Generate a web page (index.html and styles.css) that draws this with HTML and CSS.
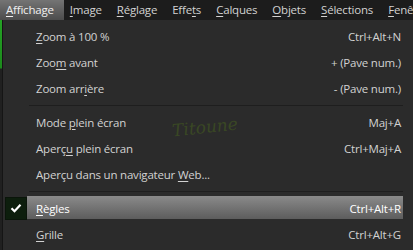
FILE: index.html
```html
<!DOCTYPE html>
<html lang="fr">
<head>
    <meta charset="UTF-8">
    <title>Affichage</title>
    <link rel="stylesheet" href="styles.css">
</head>
<body>
    <div class="menubar">
        <span class="top active"><u>A</u>ffichage</span>
        <span class="top"><u>I</u>mage</span>
        <span class="top"><u>R</u>églage</span>
        <span class="top">Effe<u>t</u>s</span>
        <span class="top"><u>C</u>alques</span>
        <span class="top"><u>O</u>bjets</span>
        <span class="top"><u>S</u>élections</span>
        <span class="top"><u>F</u>enêtre</span>
    </div>

    <div class="workspace">
        <div class="edge"></div>
        <div class="menu">
            <div class="item"><span class="check"></span><span class="label"><u>Z</u>oom à 100 %</span><span class="key">Ctrl+Alt+N</span></div>
            <div class="item"><span class="check"></span><span class="label">Zoo<u>m</u> avant</span><span class="key">+ (Pave num.)</span></div>
            <div class="item"><span class="check"></span><span class="label">Zoom arr<u>i</u>ère</span><span class="key">- (Pave num.)</span></div>
            <div class="sep"></div>
            <div class="item"><span class="check"></span><span class="label">Mode <u>p</u>lein écran</span><span class="key">Maj+A</span></div>
            <div class="item"><span class="check"></span><span class="label">Aperç<u>u</u> plein écran</span><span class="key">Ctrl+Maj+A</span></div>
            <div class="item"><span class="check"></span><span class="label">Aperçu dans un navigateur <u>W</u>eb...</span><span class="key"></span></div>
            <div class="sep"></div>
            <div class="item selected">
                <span class="check on">
                    <svg width="12" height="10" viewBox="0 0 12 10"><path d="M1.5 5.2 L4.5 8.2 L10.5 1.8" fill="none" stroke="#ffffff" stroke-width="2.2"/></svg>
                </span>
                <span class="label"><u>R</u>ègles</span><span class="key">Ctrl+Alt+R</span>
            </div>
            <div class="item"><span class="check"></span><span class="label"><u>G</u>rille</span><span class="key">Ctrl+Alt+G</span></div>
        </div>
        <div class="mark">Titoune</div>
    </div>
</body>
</html>
```

FILE: styles.css
```css
* { margin: 0; padding: 0; box-sizing: border-box; }
body {
    font-family: "Open Sans", "Noto Sans", sans-serif;
    font-size: 11.5px;
    letter-spacing: -0.2px;
    color: #d2d2d2;
    background: #2b2b2b;
    width: 413px;
    height: 250px;
    overflow: hidden;
}
u { text-decoration-thickness: 1px; text-underline-offset: 2px; }
.menubar {
    display: flex;
    height: 20px;
    background: #1c1c1c;
    white-space: nowrap;
    overflow: hidden;
}
.top {
    line-height: 20px;
    padding: 0 6px;
    margin-right: 3px;
}
.top.active {
    background: linear-gradient(#747474, #4c4c4c);
    color: #f0f0f0;
    padding-right: 10px;
    margin-right: 0;
}
.workspace {
    position: relative;
    display: flex;
    height: 230px;
}
.edge {
    width: 3px;
    background: linear-gradient(#25a325 0, #1c8a1c 48px, #202020 49px);
    border-right: 1px solid #151515;
    flex: none;
}
.menu {
    width: 400px;
    padding-top: 3px;
    background: #2b2b2b;
}
.item {
    display: flex;
    align-items: center;
    height: 26px;
    padding-right: 2px;
}
.check {
    width: 22px;
    height: 23px;
    margin: 0 9px 0 2px;
    flex: none;
    display: flex;
    align-items: center;
    justify-content: center;
}
.label { flex: 1; white-space: nowrap; }
.key { white-space: nowrap; }
.sep {
    height: 8px;
    margin-left: 26px;
    display: flex;
    align-items: center;
}
.sep::before {
    content: "";
    flex: 1;
    height: 1px;
    background: #1e1e1e;
}
.item.selected {
    background: linear-gradient(#8a8a8a, #5d5d5d) 24px 1px / 100% 23px no-repeat;
    color: #ffffff;
}
.check.on {
    background: #0d1e0d;
    border: 1px solid #0a150a;
}
.mark {
    position: absolute;
    left: 172px;
    top: 97px;
    font-family: "DejaVu Serif", serif;
    font-style: italic;
    font-size: 17px;
    letter-spacing: 0;
    color: #4c6a1c;
    opacity: 0.45;
    transform: rotate(-6deg);
}
```
